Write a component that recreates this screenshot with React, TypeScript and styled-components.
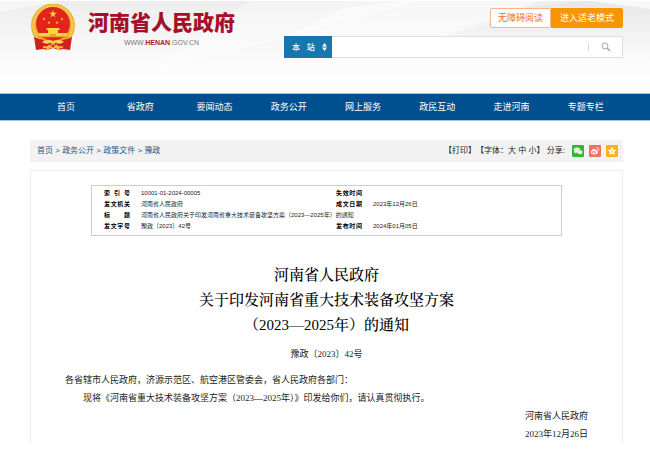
import React from "react";
import styled, { createGlobalStyle } from "styled-components";

const SANS = `"Liberation Sans", "Noto Sans CJK SC", sans-serif`;
const SERIF = `"Liberation Serif", "Noto Serif CJK SC", "Noto Sans CJK SC", serif`;
const BODY = `"Liberation Serif", "Noto Sans CJK SC", serif`;

const GlobalStyle = createGlobalStyle`
  *, *::before, *::after { box-sizing: border-box; }
  body { margin: 0; background: #fff; color: #222; font-family: ${SANS}; }
  h1, p { margin: 0; }
  a { color: inherit; text-decoration: none; }
  button, input, select { font-family: inherit; margin: 0; }
`;

const Header = styled.header`
  position: relative;
  display: flex;
  justify-content: space-between;
  height: 93px;
  padding: 4px 27px 0 30px;
`;

const Backdrop = styled.svg`
  position: absolute;
  inset: 0;
  z-index: -1;
  width: 100%;
  height: 100%;
`;

const Brand = styled.a`
  display: flex;
  align-items: flex-start;
  gap: 12px;
`;

const Emblem = styled.svg`
  width: 46px;
  height: 47px;
`;

const BrandText = styled.span`
  display: flex;
  flex-direction: column;
  align-items: center;
  padding-top: 5px;
`;

const BrandName = styled.span`
  color: #a50f28;
  font-size: 21px;
  font-weight: 900;
  line-height: 28px;
`;

const BrandUrl = styled.span`
  color: #777;
  font-size: 7px;
  line-height: 12px;
  b { color: #b01830; }
`;

const HeaderTools = styled.div`
  display: flex;
  flex-direction: column;
  align-items: flex-end;
  gap: 8px;
  width: 339px;
  padding-top: 4px;
`;

const ModeButtons = styled.div`
  display: flex;
`;

const ModeButton = styled.button<{ $filled?: boolean }>`
  height: 20px;
  padding: 0 ${(p) => (p.$filled ? 8 : 7)}px;
  border: 1px solid ${(p) => (p.$filled ? "#f99500" : "#fbb48a")};
  border-radius: ${(p) => (p.$filled ? "0 2px 2px 0" : "2px 0 0 2px")};
  background: ${(p) => (p.$filled ? "#f99500" : "#fff")};
  color: ${(p) => (p.$filled ? "#fff" : "#f26a2a")};
  font-size: 9px;
  line-height: 16px;
`;

const SearchForm = styled.form`
  display: flex;
  align-items: center;
  width: 100%;
  height: 22px;
  border: 1px solid #dedede;
  background: #fff;
`;

const ScopeBox = styled.label`
  display: flex;
  align-items: center;
  align-self: stretch;
  width: 48px;
  margin: -1px 0 -1px -1px;
  padding: 0 5px 0 8px;
  background: #1776ae;
`;

const ScopeSelect = styled.select`
  flex: 1;
  min-width: 0;
  padding: 0;
  border: 0;
  appearance: none;
  background: transparent;
  color: #fff;
  font-size: 8px;
  font-weight: 500;
`;

const SearchInput = styled.input`
  flex: 1;
  min-width: 0;
  height: 100%;
  border: 0;
  outline: 0;
  background: transparent;
  font-size: 9px;
`;

const SearchButton = styled.button`
  display: flex;
  align-items: center;
  justify-content: center;
  width: 34px;
  height: 8px;
  padding: 0;
  border: 0;
  border-left: 1px solid #d8d8d8;
  background: transparent;
`;

const Nav = styled.nav`
  display: grid;
  grid-template-columns: repeat(8, 1fr);
  height: 28px;
  padding: 0 27px 0 29px;
  border-top: 1px solid #9fc3e0;
  border-bottom: 1px solid #9fc3e0;
  background: #00508f;
`;

const NavLink = styled.a`
  color: #fff;
  font-size: 9px;
  line-height: 26px;
  text-align: center;
`;

const Main = styled.main`
  padding: 19px 27px 15px 30px;
`;

const LocationBar = styled.div`
  display: flex;
  align-items: center;
  justify-content: space-between;
  height: 22px;
  padding: 0 5px 0 7px;
  background: #f2f2f2;
  font-size: 8px;
  line-height: 20px;
`;

const Breadcrumb = styled.nav`
  color: #1d5a8c;
`;

const Tools = styled.div`
  display: flex;
  align-items: center;
  gap: 5px;
`;

const ToolText = styled.span`
  margin-right: 2px;
`;

const TextButton = styled.button`
  padding: 0;
  border: 0;
  background: transparent;
  color: inherit;
  font-size: 8px;
  line-height: 20px;
`;

const ShareButton = styled.button<{ $color: string }>`
  display: flex;
  width: 12px;
  height: 12px;
  padding: 0;
  border: 0;
  border-radius: 1px;
  background: ${(p) => p.$color};
`;

const Card = styled.article`
  min-height: 272px;
  margin-top: 8px;
  padding: 14px 34px 0;
  border: 1px solid #ededed;
  border-bottom: 0;
`;

const InfoBox = styled.div`
  margin: 0 26px;
  padding: 2px 12px 3px;
  border: 1px solid #ccc;
`;

const InfoTable = styled.table`
  width: 100%;
  border-collapse: collapse;
  table-layout: fixed;
  color: #222;
  font-size: 6px;
  line-height: 11px;
  th, td { height: 11px; padding: 0; text-align: left; white-space: nowrap; }
  th { color: #000; font-weight: 700; }
`;

const LabelCol = styled.col`
  width: 37px;
`;

const FirstValueCol = styled.col`
  width: 195px;
`;

const LabelText = styled.span`
  display: block;
  width: 26px;
  text-align: justify;
  text-align-last: justify;
`;

const Title = styled.h1`
  margin-top: 27px;
  color: #000;
  font-family: ${SERIF};
  font-size: 15px;
  font-weight: 500;
  line-height: 25px;
  text-align: center;
`;

const DocNumber = styled.p`
  margin-top: 7px;
  font-family: ${BODY};
  font-size: 9px;
  line-height: 18px;
  text-align: center;
`;

const Body = styled.div`
  margin-top: 8px;
  font-family: ${BODY};
  font-size: 9px;
  line-height: 18px;
`;

const Indented = styled.p`
  text-indent: 2em;
`;

const Signature = styled.p`
  text-align: right;
`;

const NAV = ["首页", "省政府", "要闻动态", "政务公开", "网上服务", "政民互动", "走进河南", "专题专栏"];
const CRUMBS = ["首页", "政务公开", "政策文件", "豫政"];

function HeaderBackdrop() {
  return (
    <Backdrop viewBox="0 0 650 93" preserveAspectRatio="none" aria-hidden="true">
      <defs>
        <linearGradient id="fade" x1="0" y1="0" x2="0" y2="1">
          <stop offset="0" stopColor="#ededed" />
          <stop offset="0.85" stopColor="#fff" />
        </linearGradient>
        <linearGradient id="ridge" x1="0" y1="0" x2="0" y2="1">
          <stop offset="0" stopColor="#e2e2e2" />
          <stop offset="1" stopColor="#fff" stopOpacity="0" />
        </linearGradient>
      </defs>
      <rect y="1" width="650" height="92" fill="url(#fade)" />
      <path d="M0 1H60L0 12Z" fill="#f6f6f6" />
      <path d="M150 70 250 1H420L284 38Z" fill="#fff" opacity="0.4" />
      <path d="M284 38 345 8 400 1H540L440 38Z" fill="#fff" opacity="0.5" />
      <path d="M462 35 525 8 580 1H650V60L480 78 275 76V70Z" fill="url(#ridge)" opacity="0.6" />
      <path d="M590 1H650V9Z" fill="#f8f8f8" />
    </Backdrop>
  );
}

function NationalEmblem() {
  const star = "M0-1 .23-.31.95-.31.36.12.59.81 0 .38-.59.81-.36.12-.95-.31-.23-.31Z";
  return (
    <Emblem viewBox="0 0 46 47" role="img" aria-label="国徽">
      <circle cx="23" cy="21.5" r="22" fill="#efb437" />
      <circle cx="23" cy="21.5" r="19.5" fill="none" stroke="#f9cf5c" strokeWidth="2" strokeDasharray="2 1" />
      <circle cx="23" cy="20" r="17" fill="#e1251b" />
      <g fill="#fbd33c">
        <path d={star} transform="translate(23 10) scale(4.2)" />
        <path d={star} transform="translate(14 15) scale(1.7)" />
        <path d={star} transform="translate(19 18.5) scale(1.7)" />
        <path d={star} transform="translate(27 18.5) scale(1.7)" />
        <path d={star} transform="translate(32 15) scale(1.7)" />
        <path d="M17 24h12l1 2h-2v3h9v4H9v-4h9v-3h-2Z" />
      </g>
      <path d="M8 33h30M20 31h6" stroke="#d9731f" />
      <path d="M4 33q6 3 11 3l8 2 8-2q5 0 11-3l-2 13-7-1-4 1-6-2-6 2-4-1-7 1Z" fill="#d31f1c" />
      <path d="M12 38q4-4 11-1 7-3 11 1-4 3-8 1l-3 1-3-1q-4 2-8-1Z" fill="#f8cf55" />
      <path d="M13 43q5 1 7-2M33 43q-5 1-7-2M16 46l4-3h6l4 3" fill="none" stroke="#f3b83a" strokeWidth="1.8" />
      <circle cx="23" cy="42" r="2" fill="#d31f1c" stroke="#f6c74b" />
    </Emblem>
  );
}

function WechatIcon() {
  return (
    <svg viewBox="0 0 12 12" aria-hidden="true">
      <ellipse cx="4.9" cy="5" rx="3.2" ry="2.6" fill="#fff" />
      <path d="m3 6.5-.4 2L5 7.3Z" fill="#fff" />
      <ellipse cx="7.8" cy="7" rx="2.7" ry="2.1" fill="#fff" stroke="#35b535" strokeWidth=".4" />
      <path d="m8 8.8 1.7.8-.2-1.5Z" fill="#fff" />
      <g fill="#35b535">
        <circle cx="3.9" cy="4.4" r=".4" />
        <circle cx="5.9" cy="4.4" r=".4" />
        <circle cx="7" cy="6.6" r=".3" />
        <circle cx="8.6" cy="6.6" r=".3" />
      </g>
    </svg>
  );
}

function WeiboIcon() {
  return (
    <svg viewBox="0 0 12 12" aria-hidden="true">
      <path d="M2 7.2C2 5.4 4.5 3.3 5.6 4c.4.2.3.7.2 1 1.2-.5 2.2-.3 1.9.8 2.6.9.7 3.7-2.5 3.7C3.3 9.5 2 8.5 2 7.2Z" fill="#fff" />
      <ellipse cx="5" cy="7.3" rx="1.9" ry="1.3" fill="#ee7166" />
      <circle cx="4.8" cy="7.4" r=".8" fill="#fff" />
      <path d="M7.3 2.7c1.9-.4 3.2.9 2.7 2.8M7.4 4.1c.9-.1 1.4.4 1.2 1.2" fill="none" stroke="#fff" strokeWidth=".7" />
    </svg>
  );
}

function StarIcon() {
  return (
    <svg viewBox="0 0 12 12" aria-hidden="true">
      <path d="m6 1.7 1.3 2.8 3 .4-2.2 2 .6 3L6 8.4 3.3 9.9l.6-3L1.7 4.9l3-.4Z" fill="#fff" />
      <path d="M4.9 5.6h2.2L5 7.3h2.3" fill="none" stroke="#f9b516" strokeWidth=".4" />
    </svg>
  );
}

export default function App() {
  return (
    <>
      <GlobalStyle />
      <Header>
        <HeaderBackdrop />
        <Brand href="#">
          <NationalEmblem />
          <BrandText>
            <BrandName>河南省人民政府</BrandName>
            <BrandUrl>WWW.<b>HENAN</b>.GOV.CN</BrandUrl>
          </BrandText>
        </Brand>
        <HeaderTools>
          <ModeButtons>
            <ModeButton type="button">无障碍阅读</ModeButton>
            <ModeButton type="button" $filled>进入适老模式</ModeButton>
          </ModeButtons>
          <SearchForm role="search" onSubmit={(e) => e.preventDefault()}>
            <ScopeBox>
              <ScopeSelect aria-label="搜索范围">
                <option>本&nbsp;&nbsp; 站</option>
              </ScopeSelect>
              <svg width="5" height="8" viewBox="0 0 5 8" aria-hidden="true">
                <path d="M0 3.5 2.5 0 5 3.5ZM0 4.5 2.5 8 5 4.5Z" fill="#fff" />
              </svg>
            </ScopeBox>
            <SearchInput type="text" aria-label="搜索内容" />
            <SearchButton type="submit" aria-label="搜索">
              <svg width="10" height="10" viewBox="0 0 10 10" aria-hidden="true">
                <circle cx="4" cy="4" r="3" fill="none" stroke="#aaa" />
                <path d="m6 6 3 3" stroke="#aaa" strokeWidth="1.4" />
              </svg>
            </SearchButton>
          </SearchForm>
        </HeaderTools>
      </Header>
      <Nav aria-label="主导航">
        {NAV.map((item) => (
          <NavLink key={item} href="#">{item}</NavLink>
        ))}
      </Nav>
      <Main>
        <LocationBar>
          <Breadcrumb aria-label="当前位置">
            {CRUMBS.map((item, i) => (
              <React.Fragment key={item}>
                {i > 0 && " > "}
                <a href="#">{item}</a>
              </React.Fragment>
            ))}
          </Breadcrumb>
          <Tools>
            <ToolText>
              <TextButton type="button">【打印】</TextButton>【字体：
              <TextButton type="button">大</TextButton>{" "}
              <TextButton type="button">中</TextButton>{" "}
              <TextButton type="button">小</TextButton>】 分享:
            </ToolText>
            <ShareButton type="button" aria-label="分享到微信" $color="#35b535"><WechatIcon /></ShareButton>
            <ShareButton type="button" aria-label="分享到微博" $color="#ee7166"><WeiboIcon /></ShareButton>
            <ShareButton type="button" aria-label="收藏" $color="#f9b516"><StarIcon /></ShareButton>
          </Tools>
        </LocationBar>
        <Card>
          <InfoBox>
            <InfoTable>
              <colgroup>
                <LabelCol />
                <FirstValueCol />
                <LabelCol />
                <col />
              </colgroup>
              <tbody>
                <tr>
                  <th scope="row"><LabelText>索 引 号</LabelText></th>
                  <td>10001-01-2024-00005</td>
                  <th scope="row"><LabelText>失效时间</LabelText></th>
                  <td />
                </tr>
                <tr>
                  <th scope="row"><LabelText>发文机关</LabelText></th>
                  <td>河南省人民政府</td>
                  <th scope="row"><LabelText>成文日期</LabelText></th>
                  <td>2023年12月26日</td>
                </tr>
                <tr>
                  <th scope="row"><LabelText>标 题</LabelText></th>
                  <td colSpan={3}>河南省人民政府关于印发河南省重大技术装备攻坚方案（2023—2025年）的通知</td>
                </tr>
                <tr>
                  <th scope="row"><LabelText>发文字号</LabelText></th>
                  <td>豫政〔2023〕42号</td>
                  <th scope="row"><LabelText>发布时间</LabelText></th>
                  <td>2024年01月05日</td>
                </tr>
              </tbody>
            </InfoTable>
          </InfoBox>
          <Title>
            河南省人民政府<br />
            关于印发河南省重大技术装备攻坚方案<br />
            （2023—2025年）的通知
          </Title>
          <DocNumber>豫政〔2023〕42号</DocNumber>
          <Body>
            <p>各省辖市人民政府，济源示范区、航空港区管委会，省人民政府各部门：</p>
            <Indented>现将《河南省重大技术装备攻坚方案（2023—2025年）》印发给你们，请认真贯彻执行。</Indented>
            <Signature>河南省人民政府<br />2023年12月26日</Signature>
          </Body>
        </Card>
      </Main>
    </>
  );
}
